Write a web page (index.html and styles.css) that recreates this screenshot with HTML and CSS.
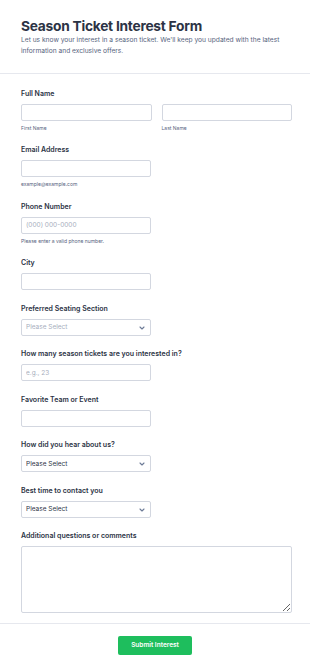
FILE: index.html
```html
<!DOCTYPE html>
<html lang="en">
<head>
<meta charset="utf-8">
<title>Season Ticket Interest Form</title>
<link rel="stylesheet" href="styles.css">
</head>
<body>
<div class="page">
  <header class="header">
    <h1 class="title">Season Ticket Interest Form</h1>
    <p class="subtitle">Let us know your interest in a season ticket. We'll keep you updated with the latest information and exclusive offers.</p>
  </header>
  <form class="form">
    <div class="field">
      <label class="label">Full Name</label>
      <div class="row">
        <div class="col">
          <input class="input input-full" type="text">
          <span class="sublabel">First Name</span>
        </div>
        <div class="col">
          <input class="input input-full" type="text">
          <span class="sublabel">Last Name</span>
        </div>
      </div>
    </div>
    <div class="field">
      <label class="label">Email Address</label>
      <input class="input" type="email">
      <span class="sublabel">example@example.com</span>
    </div>
    <div class="field">
      <label class="label">Phone Number</label>
      <input class="input" type="tel" placeholder="(000) 000-0000">
      <span class="sublabel">Please enter a valid phone number.</span>
    </div>
    <div class="field">
      <label class="label">City</label>
      <input class="input" type="text">
    </div>
    <div class="field">
      <label class="label">Preferred Seating Section</label>
      <div class="select-wrap">
        <select class="input select select-empty"><option>Please Select</option></select>
        <svg class="chev" width="6" height="4" viewBox="0 0 6 4"><path d="M1 1 L3 3 L5 1" fill="none" stroke="#6c7a96" stroke-width="1.1" stroke-linecap="round" stroke-linejoin="round"/></svg>
      </div>
    </div>
    <div class="field">
      <label class="label">How many season tickets are you interested in?</label>
      <input class="input" type="text" placeholder="e.g., 23">
    </div>
    <div class="field">
      <label class="label">Favorite Team or Event</label>
      <input class="input" type="text">
    </div>
    <div class="field">
      <label class="label">How did you hear about us?</label>
      <div class="select-wrap">
        <select class="input select"><option>Please Select</option></select>
        <svg class="chev" width="6" height="4" viewBox="0 0 6 4"><path d="M1 1 L3 3 L5 1" fill="none" stroke="#6c7a96" stroke-width="1.1" stroke-linecap="round" stroke-linejoin="round"/></svg>
      </div>
    </div>
    <div class="field">
      <label class="label">Best time to contact you</label>
      <div class="select-wrap">
        <select class="input select"><option>Please Select</option></select>
        <svg class="chev" width="6" height="4" viewBox="0 0 6 4"><path d="M1 1 L3 3 L5 1" fill="none" stroke="#6c7a96" stroke-width="1.1" stroke-linecap="round" stroke-linejoin="round"/></svg>
      </div>
    </div>
    <div class="field">
      <label class="label">Additional questions or comments</label>
      <textarea class="textarea"></textarea>
    </div>
  </form>
  <div class="footer">
    <button class="submit" type="button">Submit Interest</button>
  </div>
</div>
</body>
</html>
```
FILE: styles.css
```css
* { box-sizing: border-box; }
html, body { margin: 0; padding: 0; background: #ffffff; }
body { font-family: Inter, "Noto Sans", sans-serif; color: #2c3345; }
.page { width: 310px; }
.header { padding: 17px 21px 16px 21px; border-bottom: 1px solid #e6e8ee; }
.title { margin: 0; font-size: 13.75px; line-height: 18px; font-weight: 700; color: #2c3345; letter-spacing: -0.25px; }
.subtitle { margin: 0; font-size: 6.65px; line-height: 11px; color: #57647e; }
.form { padding: 15px 18px 10px 21px; display: flex; flex-direction: column; gap: 13.45px; border-bottom: 1px solid #e6e8ee; }
.field { display: flex; flex-direction: column; align-items: flex-start; }
.label { display: block; font-size: 7px; line-height: 10px; font-weight: 600; color: #2c3345; margin-bottom: 5px; }
.row { display: grid; grid-template-columns: 1fr 1fr; column-gap: 10px; width: 100%; }
.col { display: flex; flex-direction: column; }
.input { width: 130px; height: 17px; border: 1px solid #d3d7e0; border-radius: 2px; background: #fff; padding: 0 4px; font-family: inherit; font-size: 6.5px; color: #2c3345; outline: none; margin: 0; }
.input-full { width: 100%; }
.input::placeholder { color: #a7aebd; }
.sublabel { display: block; font-size: 5px; line-height: 8px; margin-top: 3px; color: #57647e; }
.select-wrap { position: relative; width: 130px; }
.select { appearance: none; -webkit-appearance: none; width: 100%; display: block; }
.select-empty { color: #a7aebd; }
.chev { position: absolute; right: 6px; top: 7px; }
.textarea { width: 100%; height: 67px; border: 1px solid #d3d7e0; border-radius: 2px; margin: 0; padding: 4px; font-family: inherit; font-size: 6.5px; resize: vertical; display: block; }
.footer { display: flex; justify-content: center; padding: 12px 0 17px 0; }
.submit { width: 74px; height: 19px; border: none; border-radius: 2px; background: #1ebe5d; color: #ffffff; font-family: inherit; font-size: 6.5px; font-weight: 600; padding: 0; cursor: pointer; }
```
